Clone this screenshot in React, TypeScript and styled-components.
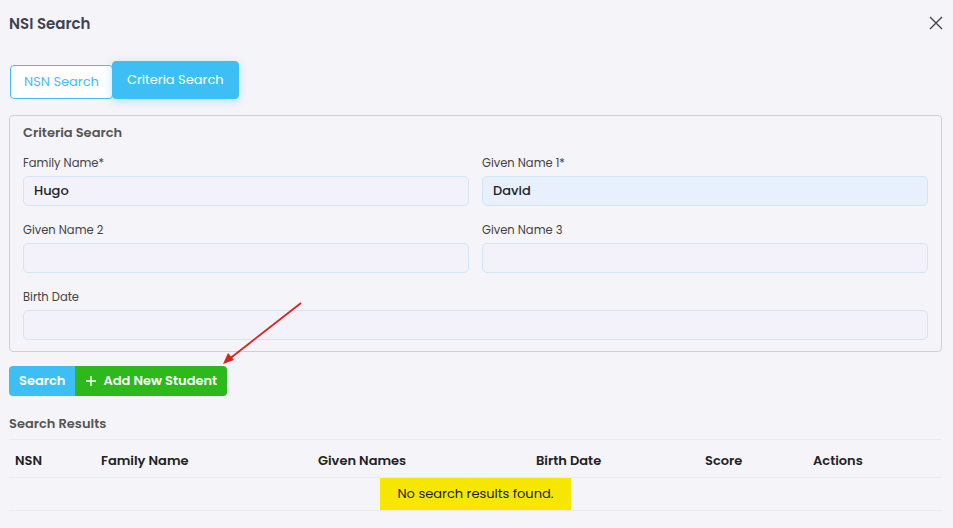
import styled, { createGlobalStyle } from 'styled-components';

const GlobalStyle = createGlobalStyle`
	* { box-sizing: border-box; }
	body {
		margin: 0;
		background: #f5f4f9;
		font-family: Poppins, Inter, 'Open Sans', sans-serif;
		color: #3f4254;
	}
`;

const Modal = styled.div`
	position: relative;
	width: 953px;
	height: 528px;
	padding: 0 11px 0 9px;
	background: #f5f4f9;
	overflow: hidden;
`;

const Header = styled.div`
	display: flex;
	align-items: center;
	justify-content: space-between;
	height: 46px;
	margin-right: -1px;
`;

const Title = styled.h1`
	margin: 0;
	font-size: 15px;
	font-weight: 600;
	color: #3f4254;
`;

const CloseButton = styled.button`
	display: flex;
	border: none;
	background: none;
	padding: 0;
	cursor: pointer;
	color: #444;
`;

const Tabs = styled.div`
	display: flex;
	align-items: flex-end;
	margin-top: 15px;
	padding-left: 1px;
`;

const Tab = styled.button<{ $active?: boolean }>`
	font-family: inherit;
	font-size: 13px;
	cursor: pointer;
	border-radius: 4px;
	${({ $active }) =>
		$active
			? `
		height: 38px;
		padding: 0 14px;
		background: #3dbff5;
		color: #fff;
		border: 1px solid #3dbff5;
		box-shadow: 0 2px 8px rgba(61, 191, 245, 0.35);
		margin-left: -1px;
	`
			: `
		height: 34px;
		padding: 0 13px;
		background: #fff;
		color: #3dbff5;
		border: 1px solid #3dbff5;
	`}
`;

const Panel = styled.fieldset`
	margin: 16px 0 0;
	padding: 7px 13px 11px;
	border: 1px solid #cfcfd4;
	border-radius: 4px;
`;

const PanelTitle = styled.div`
	font-size: 13px;
	font-weight: 600;
	color: #555;
	margin-bottom: 12px;
`;

const FieldGrid = styled.div`
	display: grid;
	grid-template-columns: 1fr 1fr;
	column-gap: 13px;
	row-gap: 16px;
`;

const Field = styled.label<{ $full?: boolean }>`
	display: flex;
	flex-direction: column;
	grid-column: ${({ $full }) => ($full ? '1 / -1' : 'auto')};
`;

const Label = styled.span`
	font-size: 11.5px;
	color: #444;
	margin-bottom: 4px;
`;

const Input = styled.input<{ $filled?: boolean }>`
	height: 30px;
	width: 100%;
	padding: 0 10px;
	border: 1px solid #d2e6f7;
	border-radius: 5px;
	background: ${({ $filled }) => ($filled ? '#e8f0fe' : '#f3f2fa')};
	font-family: inherit;
	font-size: 13px;
	font-weight: 500;
	color: #222;
	outline: none;
`;

const ButtonRow = styled.div`
	display: flex;
	margin-top: 14px;
`;

const ActionButton = styled.button<{ $color: string }>`
	display: flex;
	align-items: center;
	gap: 6px;
	height: 30px;
	padding: 0 10px;
	border: none;
	background: ${({ $color }) => $color};
	color: #fff;
	font-family: inherit;
	font-size: 13px;
	font-weight: 600;
	cursor: pointer;
	&:first-child { border-radius: 4px 0 0 4px; }
	&:last-child { border-radius: 0 4px 4px 0; }
`;

const SectionTitle = styled.div`
	margin-top: 18px;
	padding-bottom: 5px;
	font-size: 13px;
	font-weight: 600;
	color: #555;
	border-bottom: 1px solid #ebebf0;
`;

const Table = styled.table`
	width: 100%;
	border-collapse: collapse;
	table-layout: fixed;
	margin-top: 11px;
`;

const Th = styled.th`
	text-align: left;
	padding: 0 6px 6px;
	font-size: 13px;
	font-weight: 600;
	color: #222;
	border-bottom: 1px solid #ebebf0;
`;

const Td = styled.td`
	text-align: center;
	padding: 0;
	height: 33px;
	border-bottom: 1px solid #ebebf0;
`;

const EmptyNote = styled.span`
	display: inline-block;
	height: 32px;
	line-height: 32px;
	padding: 0 17px;
	background: #f7e700;
	color: #222;
	font-size: 13px;
`;

const Arrow = styled.svg`
	position: absolute;
	left: 220px;
	top: 298px;
	pointer-events: none;
`;

const columns = [
	{ label: 'NSN', width: 86 },
	{ label: 'Family Name', width: 217 },
	{ label: 'Given Names', width: 218 },
	{ label: 'Birth Date', width: 169 },
	{ label: 'Score', width: 108 },
	{ label: 'Actions', width: 135 },
];

export default function App() {
	return (
		<>
			<GlobalStyle />
			<Modal>
				<Header>
					<Title>NSI Search</Title>
					<CloseButton aria-label='close'>
						<svg width='14' height='14' viewBox='0 0 14 14'>
							<path d='M1 1L13 13M13 1L1 13' stroke='#444' strokeWidth='1.4' />
						</svg>
					</CloseButton>
				</Header>

				<Tabs>
					<Tab>NSN Search</Tab>
					<Tab $active>Criteria Search</Tab>
				</Tabs>

				<Panel>
					<PanelTitle>Criteria Search</PanelTitle>
					<FieldGrid>
						<Field>
							<Label>Family Name*</Label>
							<Input defaultValue='Hugo' />
						</Field>
						<Field>
							<Label>Given Name 1*</Label>
							<Input defaultValue='David' $filled />
						</Field>
						<Field>
							<Label>Given Name 2</Label>
							<Input />
						</Field>
						<Field>
							<Label>Given Name 3</Label>
							<Input />
						</Field>
						<Field $full>
							<Label>Birth Date</Label>
							<Input />
						</Field>
					</FieldGrid>
				</Panel>

				<ButtonRow>
					<ActionButton $color='#3dbff5'>Search</ActionButton>
					<ActionButton $color='#2db81b'>
						<svg width='12' height='12' viewBox='0 0 12 12'>
							<path d='M6 1V11M1 6H11' stroke='#fff' strokeWidth='1.5' />
						</svg>
						Add New Student
					</ActionButton>
				</ButtonRow>

				<SectionTitle>Search Results</SectionTitle>

				<Table>
					<colgroup>
						{columns.map((c) => (
							<col key={c.label} style={{ width: c.width }} />
						))}
					</colgroup>
					<thead>
						<tr>
							{columns.map((c) => (
								<Th key={c.label}>{c.label}</Th>
							))}
						</tr>
					</thead>
					<tbody>
						<tr>
							<Td colSpan={columns.length}>
								<EmptyNote>No search results found.</EmptyNote>
							</Td>
						</tr>
					</tbody>
				</Table>

				<Arrow width='90' height='70' viewBox='0 0 90 70'>
					<path d='M81 5L8 62' stroke='#e02020' strokeWidth='1.8' />
					<path d='M3 66L8 55L14 62Z' fill='#e02020' />
				</Arrow>
			</Modal>
		</>
	);
}
